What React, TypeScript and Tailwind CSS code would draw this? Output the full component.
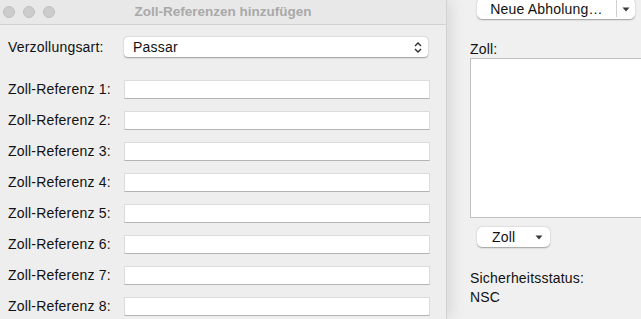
import React from "react";

const font = { fontFamily: '"Liberation Sans", Arial, sans-serif' };

function Field() {
  return (
    <div className="h-[19px] w-[306px] bg-white border border-[#dcdcdc] border-b-[#b4b4b4]" />
  );
}

function Row({ label, children, className = "" }: { label: string; children: React.ReactNode; className?: string }) {
  return (
    <div className={"flex items-center " + className}>
      <div className="w-[116px] shrink-0 text-[14px] leading-[19px] tracking-[0.2px] text-[#111111]">{label}</div>
      {children}
    </div>
  );
}

function Caret({ className = "" }: { className?: string }) {
  return (
    <svg width="8" height="5" viewBox="0 0 8 5" className={className}>
      <path d="M0.5 0.5 L7.5 0.5 L4 4.5 Z" fill="#3a3a3a" />
    </svg>
  );
}

export default function App() {
  const refs = [1, 2, 3, 4, 5, 6, 7, 8];
  return (
    <div className="flex w-[641px] h-[319px] overflow-hidden bg-[#f0f0f0]" style={font}>
      {/* Dialog sheet */}
      <div className="relative z-10 w-[447px] shrink-0 flex flex-col bg-[#eeeeee] border-r border-[#d2d2d2] shadow-[4px_0_14px_rgba(0,0,0,0.10)]">
        <div className="h-[25px] shrink-0 grid grid-cols-[60px_1fr_60px] items-center bg-[#e8e8e8] border-b border-[#d2d2d2]">
          <div className="flex items-center gap-[8px] pl-[3px]">
            <div className="w-[12px] h-[12px] rounded-full bg-[#cccccc] border border-[#c0c0c0]" />
            <div className="w-[12px] h-[12px] rounded-full bg-[#cccccc] border border-[#c0c0c0]" />
            <div className="w-[12px] h-[12px] rounded-full bg-[#cccccc] border border-[#c0c0c0]" />
          </div>
          <div className="text-center text-[13.5px] font-bold text-[#a9a9a9] leading-[24px]">
            Zoll-Referenzen hinzufügen
          </div>
          <div />
        </div>
        <div className="flex flex-col pl-[8px] pt-[12px]">
          <Row label="Verzollungsart:">
            <div className="h-[20px] w-[304px] flex items-center justify-between bg-white rounded-[4px] shadow-[0_0.5px_1.5px_rgba(0,0,0,0.35)] pl-[9px] pr-[6px]">
              <span className="text-[14px] leading-[19px] tracking-[0.2px] text-[#111111]">Passar</span>
              <svg width="8" height="11" viewBox="0 0 8 11">
                <path d="M1 4 L4 1 L7 4" fill="none" stroke="#2a2a2a" strokeWidth="1.4" />
                <path d="M1 7 L4 10 L7 7" fill="none" stroke="#2a2a2a" strokeWidth="1.4" />
              </svg>
            </div>
          </Row>
          <div className="flex flex-col gap-[12px] mt-[23px]">
            {refs.map((n) => (
              <Row key={n} label={`Zoll-Referenz ${n}:`}>
                <Field />
              </Row>
            ))}
          </div>
        </div>
      </div>

      {/* Background window */}
      <div className="flex-1 min-w-0 flex flex-col pl-[23px] text-[#111111] tracking-[0.2px]">
        <div className="ml-[7px] mt-[-2px] h-[21px] w-[158px] shrink-0 flex items-stretch bg-white rounded-[5px] shadow-[0_0.5px_1.5px_rgba(0,0,0,0.35)]">
          <div className="w-[139px] flex items-center justify-center text-[14px] leading-[19px] pt-[1px]">
            Neue Abholung…
          </div>
          <div className="w-px bg-[#cfcfcf] my-[2px]" />
          <div className="flex-1 flex items-center justify-center pt-[2px]">
            <Caret />
          </div>
        </div>
        <div className="mt-[22px] text-[14px] leading-[17px]">Zoll:</div>
        <div className="h-[160px] w-[200px] shrink-0 bg-white border border-[#bfbfbf]" />
        <div className="ml-[7px] mt-[9px] h-[20px] w-[73px] shrink-0 flex items-center bg-white rounded-[5px] shadow-[0_0.5px_1.5px_rgba(0,0,0,0.35)] pl-[15px]">
          <span className="text-[14px] leading-[19px]">Zoll</span>
          <Caret className="ml-[20px] mt-[1px]" />
        </div>
        <div className="mt-[22px] text-[14px] leading-[19px]">Sicherheitsstatus:</div>
        <div className="text-[14px] leading-[19px]">NSC</div>
      </div>
    </div>
  );
}
